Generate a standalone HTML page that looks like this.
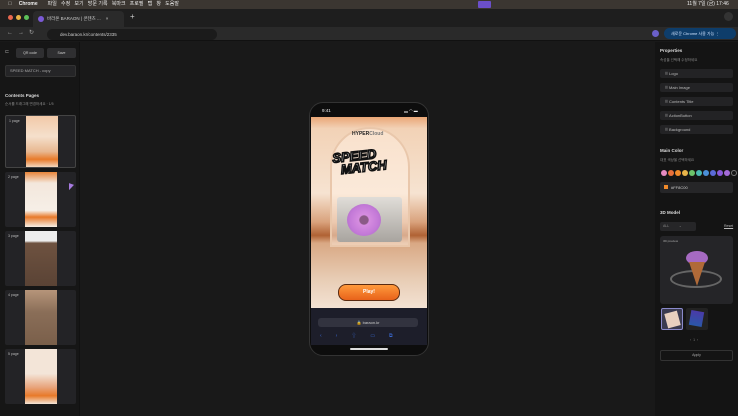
<!DOCTYPE html>
<html><head><meta charset="utf-8"><style>
*{margin:0;padding:0;box-sizing:border-box}
body{width:738px;height:416px;overflow:hidden;background:#191919;font-family:"Liberation Sans","Noto Sans CJK KR",sans-serif;color:#ddd;position:relative;font-size:5px}
.a{position:absolute}
.menu{left:0;top:0;width:738px;height:9px;background:#3b3631;color:#eee;font-size:5px;line-height:9px}
.tabs{left:0;top:9px;width:738px;height:18px;background:#1e1e1e}
.addr{left:0;top:27px;width:738px;height:14px;background:#2a2a2a;border-bottom:1px solid #111}
.lp{left:0;top:42px;width:80px;height:374px;background:#161616;border-right:1px solid #111}
.rp{left:655px;top:42px;width:83px;height:374px;background:#141414}
.card{left:5px;width:71px;background:#232326;border-radius:2px}
.card span{position:absolute;left:3px;top:3px;font-size:3.5px;color:#bbb}
.thumb{position:absolute;left:20px;top:0;width:32px;height:100%}
.item{left:660px;width:73px;height:9px;background:#232325;border-radius:2px;font-size:4px;line-height:9px;padding-left:5px;color:#bbb}
.dot{top:170px;width:6px;height:6px;border-radius:50%}
</style></head><body>
<div class="a menu"><span style="margin-left:8px">&#63743;</span><b style="margin-left:7px">Chrome</b><span style="margin-left:10px">파일 &nbsp; 수정 &nbsp; 보기 &nbsp; 방문 기록 &nbsp; 북마크 &nbsp; 프로필 &nbsp; 탭 &nbsp; 창 &nbsp; 도움말</span>
<div class="a" style="left:478px;top:1px;width:13px;height:7px;background:#6b4fc9;border-radius:1px"></div>
<span class="a" style="left:687px;top:0">11월 7일 (금) 17:46</span></div>
<div class="a tabs">
<div class="a" style="left:8px;top:6px;width:5px;height:5px;border-radius:50%;background:#e8684f"></div>
<div class="a" style="left:16px;top:6px;width:5px;height:5px;border-radius:50%;background:#e9b446"></div>
<div class="a" style="left:24px;top:6px;width:5px;height:5px;border-radius:50%;background:#5cc15a"></div>
<div class="a" style="left:33px;top:2px;width:91px;height:16px;background:#2a2a2a;border-radius:4px 4px 0 0;font-size:4.5px;line-height:16px;padding-left:14px;color:#ccc">바라온 BARAON | 콘텐츠 ... &nbsp;&nbsp; ×
<div class="a" style="left:5px;top:5px;width:6px;height:6px;border-radius:50%;background:#7b5ad6"></div></div>
<span class="a" style="left:130px;top:3px;font-size:8px;color:#ccc">+</span>
<div class="a" style="left:724px;top:3px;width:9px;height:9px;border-radius:50%;background:#333"></div>
</div>
<div class="a addr">
<span class="a" style="left:7px;top:2px;font-size:6px;color:#aaa">← &nbsp; → &nbsp; ↻</span>
<div class="a" style="left:47px;top:2px;width:170px;height:11px;border-radius:6px;background:#1b1b1b;font-size:4.5px;line-height:11px;padding-left:13px;color:#ccc">dev.baraon.kr/contents/2335</div>
<div class="a" style="left:217px;top:2px;width:0;height:0"></div>
<div class="a" style="left:47px;top:2px;width:400px;height:11px;border-radius:6px;background:#1b1b1b;z-index:-1"></div>
<div class="a" style="left:652px;top:3px;width:7px;height:7px;border-radius:50%;background:#6b60c9"></div>
<div class="a" style="left:664px;top:1px;width:72px;height:11px;border-radius:6px;background:#0e3d6a;font-size:4px;line-height:11px;padding-left:7px;color:#cfe3ff">새로운 Chrome 사용 가능 ⋮</div>
</div>
<div class="a lp">
<span class="a" style="left:5px;top:7px;font-size:5px;color:#999">⊏</span>
<div class="a" style="left:16px;top:6px;width:28px;height:10px;background:#2f2f31;border-radius:2px;font-size:3.5px;line-height:10px;text-align:center;color:#ccc">QR code</div>
<div class="a" style="left:47px;top:6px;width:29px;height:10px;background:#2f2f31;border-radius:2px;font-size:3.5px;line-height:10px;text-align:center;color:#ccc">Save</div>
<div class="a" style="left:5px;top:23px;width:71px;height:12px;background:#252527;border:1px solid #333;border-radius:2px;font-size:4px;line-height:10px;padding-left:4px;color:#aaa">SPEED MATCH - copy</div>
<div class="a" style="left:5px;top:51px;font-size:4.5px;color:#ddd;font-weight:bold">Contents Pages</div>
<div class="a" style="left:5px;top:60px;font-size:3.5px;color:#888">순서를 드래그해 변경하세요 · 1/5</div>
</div>
<div class="a card" style="top:115px;height:53px;border:1px solid #444"><span>1 page</span><div class="thumb" style="background:linear-gradient(#f2c9a8,#f5e0cc 40%,#e8b790 70%,#e87a2a 85%,#f3d7bf)"></div></div>
<div class="a card" style="top:172px;height:55px"><span>2 page</span><div class="thumb" style="background:linear-gradient(#e8853a 0,#f3e7dc 20%,#f6efe7 70%,#e87a2a 82%,#f6efe7)"></div></div>
<div class="a card" style="top:231px;height:55px"><span>3 page</span><div class="thumb" style="background:linear-gradient(#eee 0,#eee 18%,#6e5240 22%,#5a4335)"></div></div>
<div class="a card" style="top:290px;height:55px"><span>4 page</span><div class="thumb" style="background:linear-gradient(#b6957a,#8a6e58 40%,#7a5f4a)"></div></div>
<div class="a card" style="top:349px;height:55px"><span>5 page</span><div class="thumb" style="background:linear-gradient(#f3e5d8,#f3e5d8 45%,#e8a37a 70%,#e87a2a 85%,#f3e5d8)"></div></div>
<div class="a" style="left:69px;top:184px;width:0;height:0;border-left:5px solid #a77be0;border-bottom:7px solid transparent;transform:skewY(20deg)"></div>
<!-- phone -->
<div class="a" style="left:309px;top:102px;width:120px;height:254px;background:#0d0d0d;border-radius:14px;border:1px solid #333"></div>
<span class="a" style="left:322px;top:108px;font-size:4.5px;color:#eee">9:41</span>
<span class="a" style="left:404px;top:108px;font-size:4px;color:#eee">▂ ◠ ▬</span>
<div class="a" style="left:311px;top:117px;width:116px;height:191px;background:linear-gradient(#e9a676 0,#f2d2b6 6%,#f6e3d1 40%,#d9a27c 55%,#b06234 62%,#d9a884 66%,#e8cdb5 85%,#f3e2d3)"></div>
<div class="a" style="left:330px;top:127px;width:80px;height:120px;border-radius:40px 40px 0 0;border:2px solid #e9c7ab;background:rgba(255,240,225,.5)"></div>
<div class="a" style="left:352px;top:131px;font-size:5px;font-weight:bold;color:#222">HYPER<span style="color:#777">Cloud</span></div>
<div class="a" style="left:333px;top:150px;font-size:13px;font-weight:900;font-style:italic;color:#fff;line-height:12px;-webkit-text-stroke:1.5px #111;transform:rotate(-6deg)">SPEED<br>&nbsp;&nbsp;MATCH</div>
<div class="a" style="left:337px;top:197px;width:65px;height:45px;background:linear-gradient(#e0ddd8,#a8a49f);border-radius:3px"></div>
<div class="a" style="left:347px;top:204px;width:34px;height:32px;border-radius:50%;background:radial-gradient(circle,#8a5a86 0,#8a5a86 18%,#d68de0 22%,#c47ad8 60%,#a466c0)"></div>
<div class="a" style="left:338px;top:284px;width:62px;height:17px;border-radius:8px;background:linear-gradient(#ff9a3c,#e8621a);border:1px solid #5a2a10;font-size:5px;line-height:15px;text-align:center;color:#fff;font-weight:bold">Play!</div>
<div class="a" style="left:311px;top:308px;width:116px;height:37px;background:#1d1e2a"></div>
<div class="a" style="left:318px;top:318px;width:100px;height:9px;border-radius:3px;background:#32333f;font-size:4px;line-height:9px;text-align:center;color:#ccc">🔒 baraon.kr</div>
<span class="a" style="left:320px;top:332px;font-size:5px;color:#3b6bd6;letter-spacing:14px">‹›⇧▭⧉</span>
<div class="a" style="left:350px;top:348px;width:38px;height:1.5px;background:#ddd;border-radius:1px"></div>
<!-- right -->
<div class="a rp"></div>
<div class="a" style="left:660px;top:48px;font-size:4.5px;color:#ddd;font-weight:bold">Properties</div>
<div class="a" style="left:660px;top:58px;font-size:3.5px;color:#888">속성을 선택해 수정하세요</div>
<div class="a item" style="top:69px">⠿ Logo</div>
<div class="a item" style="top:83px">⠿ Main Image</div>
<div class="a item" style="top:97px">⠿ Contents Title</div>
<div class="a item" style="top:111px">⠿ ActionButton</div>
<div class="a item" style="top:125px">⠿ Background</div>
<div class="a" style="left:660px;top:148px;font-size:4.5px;color:#ddd;font-weight:bold">Main Color</div>
<div class="a" style="left:660px;top:158px;font-size:3.5px;color:#888">대표 색상을 선택하세요</div>
<div class="a dot" style="left:661px;background:#e58ac0"></div>
<div class="a dot" style="left:668px;background:#e8703a"></div>
<div class="a dot" style="left:675px;background:#f08a2a"></div>
<div class="a dot" style="left:682px;background:#e8b44a"></div>
<div class="a dot" style="left:689px;background:#6cc46a"></div>
<div class="a dot" style="left:696px;background:#4ab8b0"></div>
<div class="a dot" style="left:703px;background:#4a90d8"></div>
<div class="a dot" style="left:710px;background:#5a6ad8"></div>
<div class="a dot" style="left:717px;background:#8a5ad8"></div>
<div class="a dot" style="left:724px;background:#a46ad8"></div>
<div class="a dot" style="left:731px;border:1px solid #777"></div>
<div class="a" style="left:660px;top:182px;width:73px;height:11px;background:#262628;border-radius:2px;font-size:4px;line-height:11px;padding-left:11px;color:#ccc">#FF8C00<div class="a" style="left:4px;top:3px;width:4px;height:4px;background:#f08a2a"></div></div>
<div class="a" style="left:660px;top:210px;font-size:4.5px;color:#ddd;font-weight:bold">3D Model</div>
<div class="a" style="left:660px;top:222px;width:36px;height:9px;background:#262628;border-radius:2px;font-size:3.5px;line-height:9px;padding-left:3px;color:#888">ALL &nbsp;&nbsp;&nbsp;&nbsp;&nbsp;&nbsp;&nbsp;&nbsp; ⌄</div>
<div class="a" style="left:724px;top:224px;font-size:3.5px;color:#bbb;text-decoration:underline">Reset</div>
<div class="a" style="left:660px;top:236px;width:73px;height:68px;background:#252528;border-radius:3px"></div>
<div class="a" style="left:663px;top:239px;font-size:3px;color:#aaa">3D preview</div>
<div class="a" style="left:670px;top:270px;width:52px;height:18px;border:2px solid #666;border-radius:50%"></div>
<div class="a" style="left:686px;top:251px;width:22px;height:14px;border-radius:50%;background:#a66ac2"></div>
<div class="a" style="left:689px;top:262px;width:0;height:0;border-left:8px solid transparent;border-right:8px solid transparent;border-top:24px solid #b06a38"></div>
<div class="a" style="left:661px;top:308px;width:22px;height:22px;background:#3a3a50;border:1px solid #8a8acc;border-radius:2px"><div class="a" style="left:4px;top:3px;width:13px;height:15px;background:#e8d0c0;transform:rotate(-15deg)"></div></div>
<div class="a" style="left:686px;top:308px;width:22px;height:22px;background:#222;border-radius:2px"><div class="a" style="left:4px;top:3px;width:13px;height:15px;background:linear-gradient(#4a3aa8,#2a58a8);transform:rotate(10deg)"></div></div>
<div class="a" style="left:690px;top:338px;font-size:3.5px;color:#777">‹ &nbsp;1&nbsp; ›</div>
<div class="a" style="left:660px;top:350px;width:73px;height:11px;border:1px solid #333;border-radius:2px;font-size:3.5px;line-height:9px;text-align:center;color:#aaa">Apply</div>
</body></html>
